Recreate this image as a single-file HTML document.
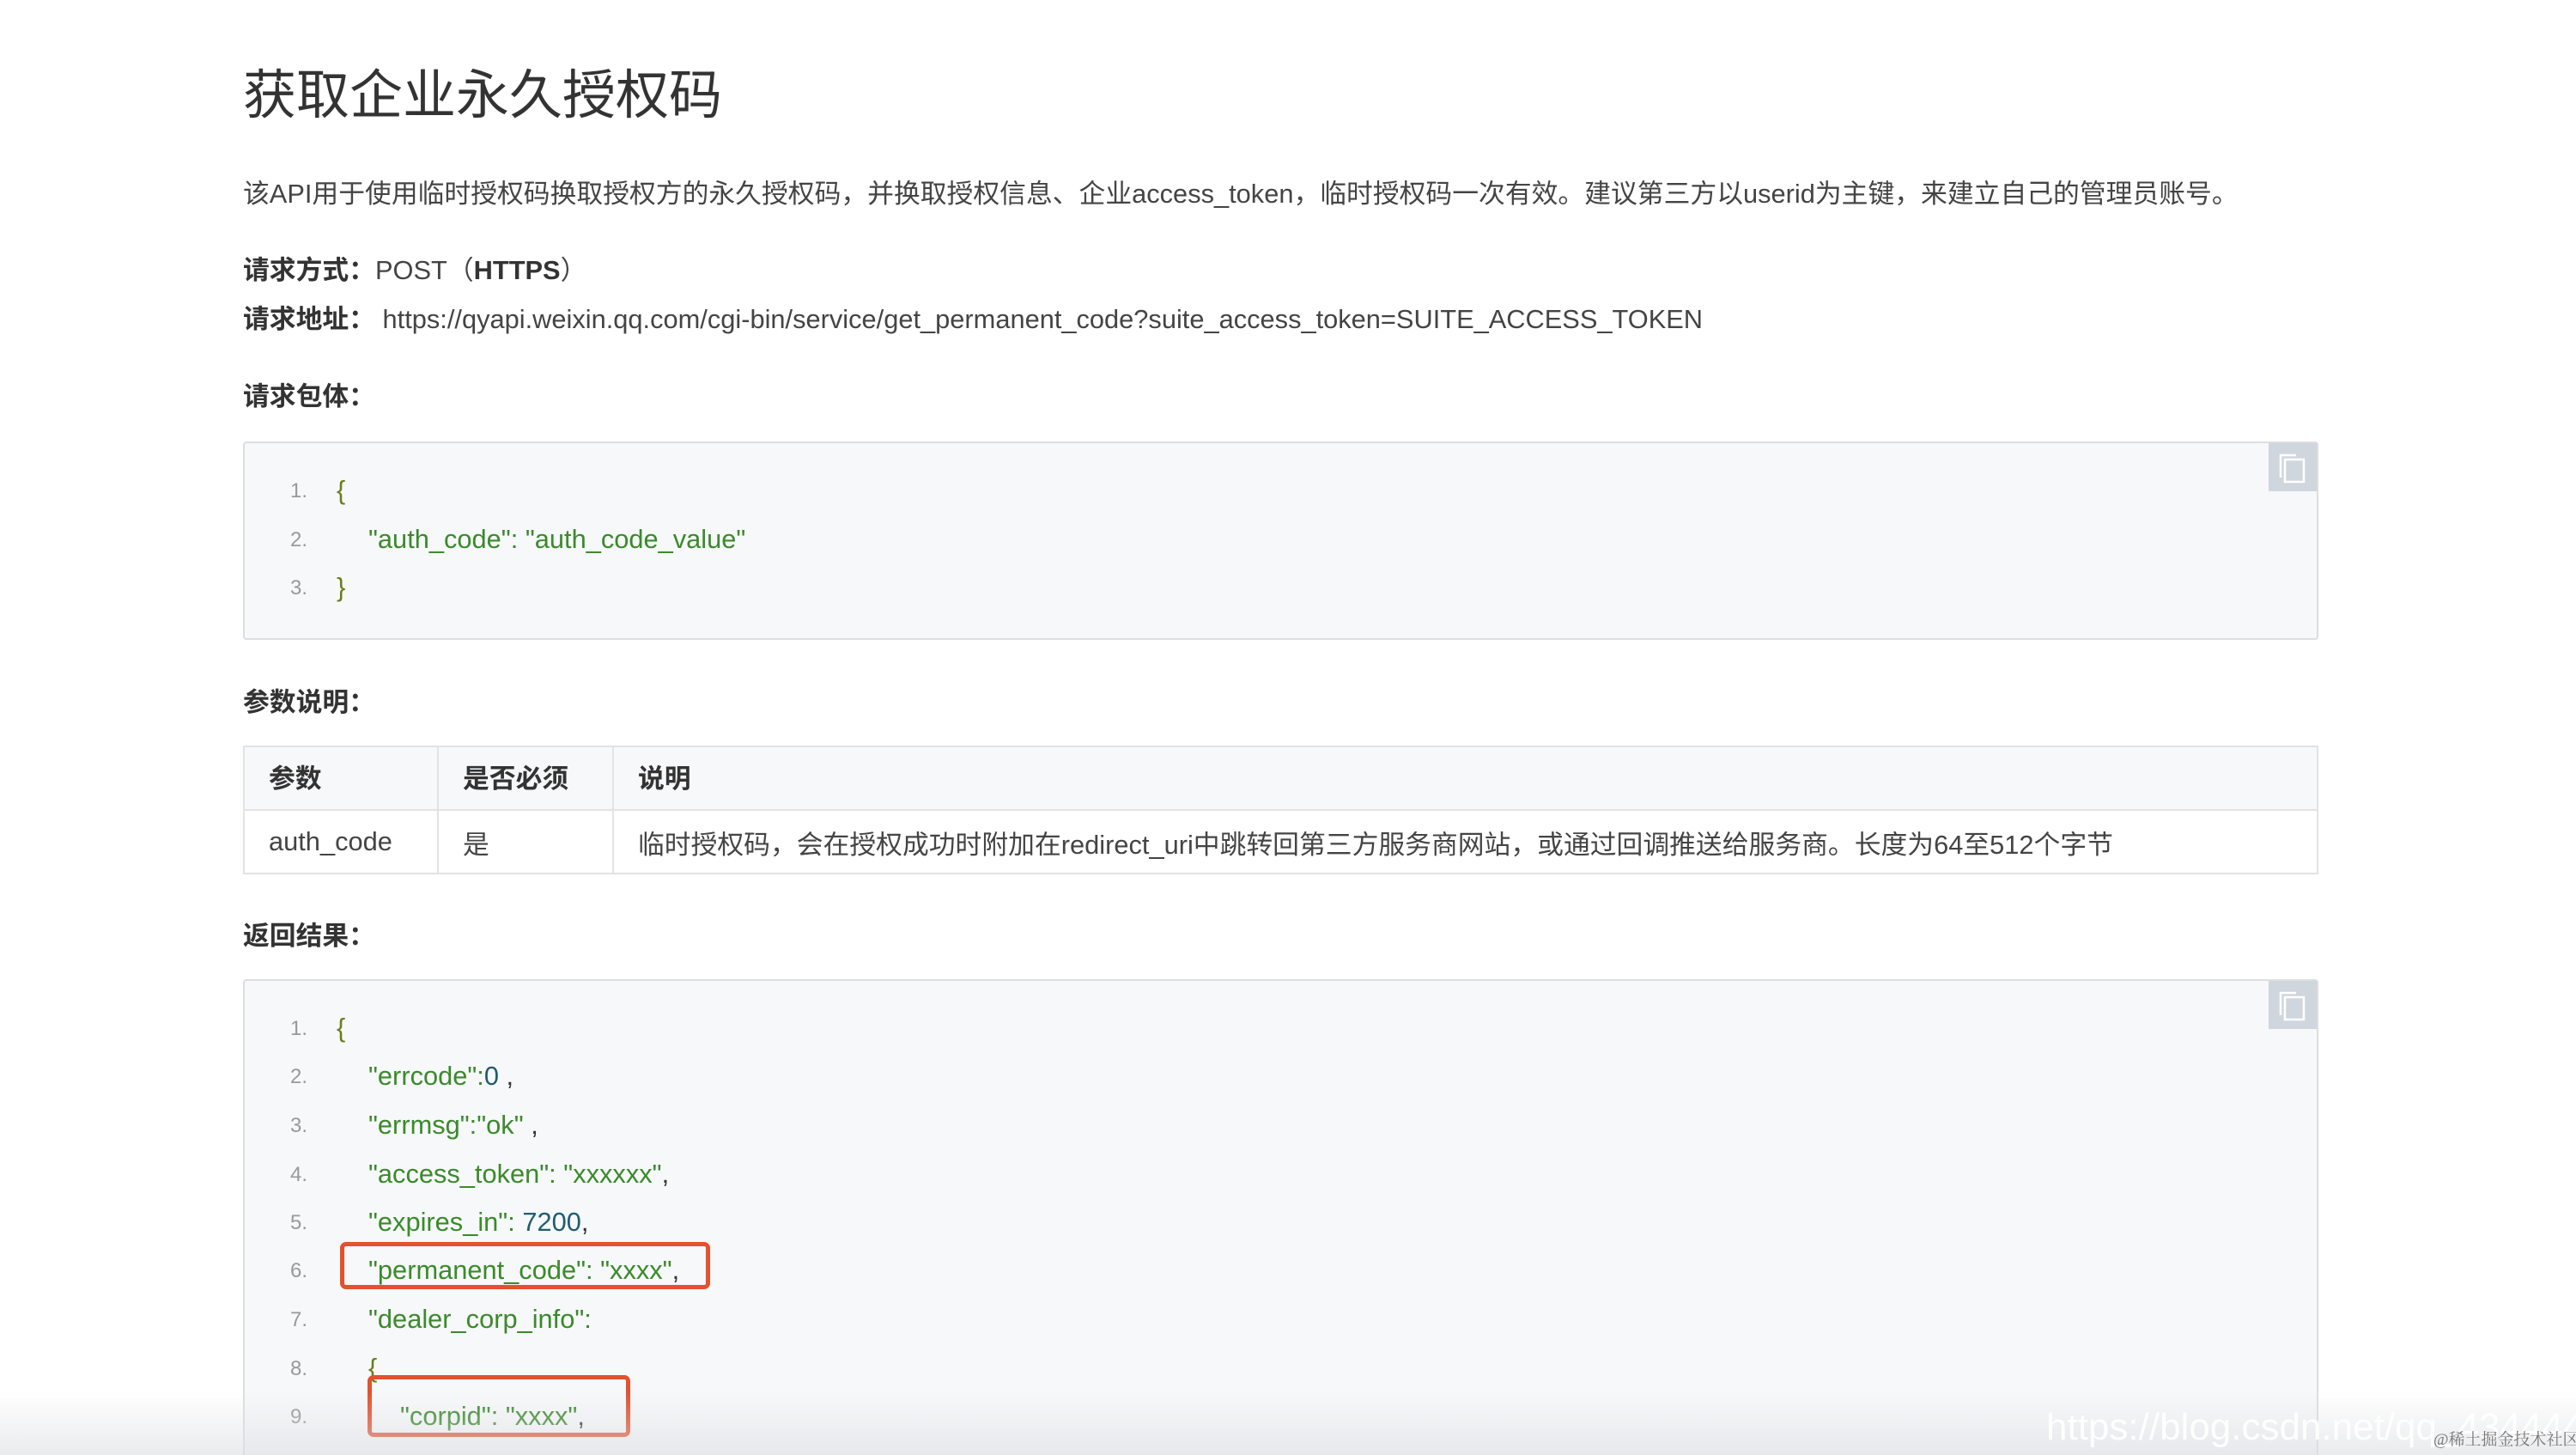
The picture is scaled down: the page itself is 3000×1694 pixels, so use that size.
<!DOCTYPE html>
<html><head><meta charset="utf-8"><style>
*{margin:0;padding:0;box-sizing:border-box}
html,body{width:3000px;height:1694px;overflow:hidden}
body{background:#fff;position:relative;font-family:"Liberation Sans","Noto Sans CJK SC",sans-serif;color:#444}
.a{position:absolute;white-space:nowrap;line-height:1}
h1{position:absolute;left:283px;top:81px;font-size:62px;font-weight:normal;color:#333;line-height:1;white-space:nowrap}
.p{font-size:30.8px;color:#444}
.b{font-weight:bold;color:#333}
.code{position:absolute;left:283px;width:2417px;background:#f6f8fa;border:2px solid #dedede;border-radius:4px}
.copy{position:absolute;right:0;top:0;width:56px;height:56px;background:#d0d6de}
.ln{position:absolute;left:338px;font-size:24px;color:#999;line-height:1}
.cl{position:absolute;font-size:30.8px;color:#3b8a2a;line-height:1;white-space:nowrap}
.br{color:#6b7d16}
.num{color:#1f5d6e}
.blk{color:#333}
table{position:absolute;left:283px;top:868px;width:2417px;border-collapse:collapse;font-size:30.8px}
td{border:2px solid #e3e3e3;height:74px;padding:0 28px;color:#444}
tr:first-child td{background:#f7f8fa;font-weight:bold;color:#333;padding-bottom:5px}
.red{position:absolute;border:5px solid #e5502d;border-radius:7px}
</style></head><body>
<h1>获取企业永久授权码</h1>
<div class="a p" style="left:283px;top:211px">该API用于使用临时授权码换取授权方的永久授权码，并换取授权信息、企业access_token，临时授权码一次有效。建议第三方以userid为主键，来建立自己的管理员账号。</div>
<div class="a p" style="left:283px;top:300px"><span class="b">请求方式：</span>POST（<span class="b">HTTPS</span>）</div>
<div class="a p" style="left:283px;top:357px"><span class="b">请求地址：</span> https://qyapi.weixin.qq.com/cgi-bin/service/get_permanent_code?suite_access_token=SUITE_ACCESS_TOKEN</div>
<div class="a p b" style="left:283px;top:447px">请求包体：</div>

<div class="code" style="top:514px;height:231px"><div class="copy"><svg width="56" height="56" viewBox="0 0 56 56"><path d="M14 40V14h18" fill="none" stroke="#fff" stroke-width="2.5"/><rect x="19" y="19" width="22" height="26" fill="none" stroke="#fff" stroke-width="2.5"/></svg></div></div>
<div class="ln" style="top:560px">1.</div><div class="cl br" style="left:392px;top:556px">{</div>
<div class="ln" style="top:617px">2.</div><div class="cl" style="left:429px;top:613px">"auth_code": "auth_code_value"</div>
<div class="ln" style="top:673px">3.</div><div class="cl br" style="left:392px;top:669px">}</div>

<div class="a p b" style="left:283px;top:803px">参数说明：</div>
<table>
<tr><td style="width:226px">参数</td><td style="width:204px">是否必须</td><td>说明</td></tr>
<tr><td>auth_code</td><td>是</td><td>临时授权码，会在授权成功时附加在redirect_uri中跳转回第三方服务商网站，或通过回调推送给服务商。长度为64至512个字节</td></tr>
</table>

<div class="a p b" style="left:283px;top:1075px">返回结果：</div>
<div class="code" style="top:1140px;height:560px"><div class="copy"><svg width="56" height="56" viewBox="0 0 56 56"><path d="M14 40V14h18" fill="none" stroke="#fff" stroke-width="2.5"/><rect x="19" y="19" width="22" height="26" fill="none" stroke="#fff" stroke-width="2.5"/></svg></div></div>
<div class="ln" style="top:1186px">1.</div><div class="cl br" style="left:392px;top:1182px">{</div>
<div class="ln" style="top:1242px">2.</div><div class="cl" style="left:429px;top:1238px">"errcode":<span class="num">0</span> <span class="blk">,</span></div>
<div class="ln" style="top:1299px">3.</div><div class="cl" style="left:429px;top:1295px">"errmsg":"ok" <span class="blk">,</span></div>
<div class="ln" style="top:1356px">4.</div><div class="cl" style="left:429px;top:1352px">"access_token": "xxxxxx"<span class="blk">,</span></div>
<div class="ln" style="top:1412px">5.</div><div class="cl" style="left:429px;top:1408px">"expires_in": <span class="num">7200</span><span class="blk">,</span></div>
<div class="ln" style="top:1468px">6.</div><div class="cl" style="left:429px;top:1464px">"permanent_code": "xxxx"<span class="blk">,</span></div>
<div class="ln" style="top:1525px">7.</div><div class="cl" style="left:429px;top:1521px">"dealer_corp_info":</div>
<div class="ln" style="top:1582px">8.</div><div class="cl br" style="left:429px;top:1578px">{</div>
<div class="ln" style="top:1638px">9.</div><div class="cl" style="left:466px;top:1634px">"corpid": "xxxx"<span class="blk">,</span></div>
<div class="red" style="left:396px;top:1446px;width:431px;height:55px"></div>
<div class="red" style="left:428px;top:1601px;width:306px;height:72px"></div>

<div style="position:absolute;left:0;top:1620px;width:3000px;height:74px;background:linear-gradient(to bottom,rgba(220,222,225,0),rgba(220,222,225,0.6))"></div>
<div class="a" style="left:2383px;top:1640px;font-size:44px;color:rgba(255,255,255,0.9)">https://blog.csdn.net/qq_43444444</div>
<div class="a" style="left:2834px;top:1667px;font-size:19px;color:#777;font-family:'Liberation Serif','Noto Serif CJK SC',serif">@稀土掘金技术社区</div>
</body></html>
